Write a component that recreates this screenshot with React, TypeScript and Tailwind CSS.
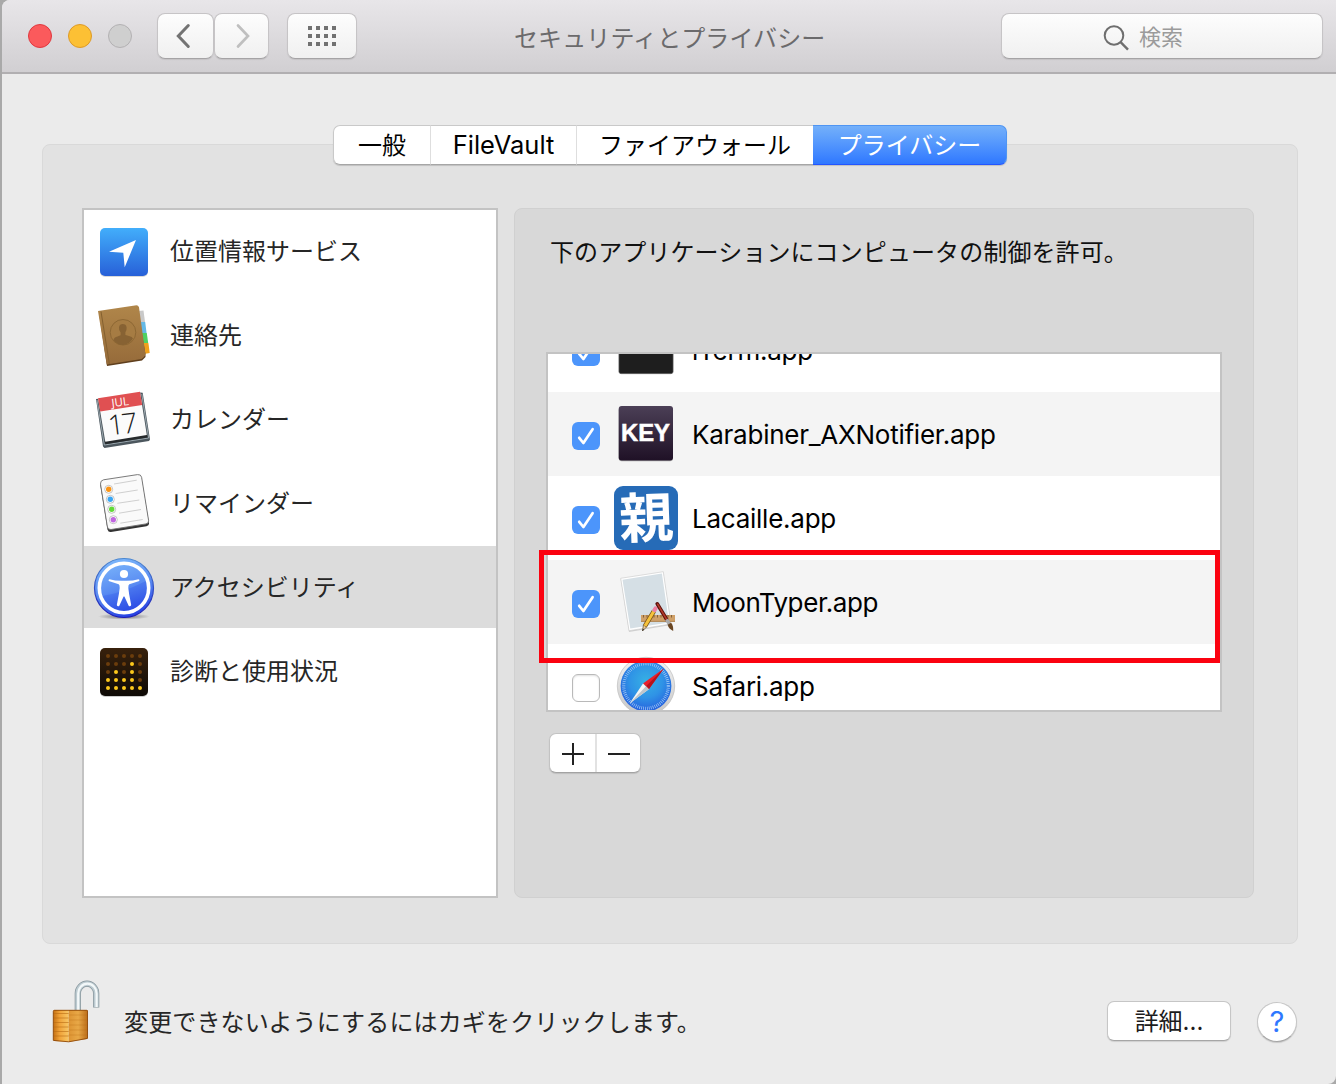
import type { ReactNode } from "react";

function Svg({ children }: { children: ReactNode }) {
  return (
    <svg width="64" height="64" viewBox="0 0 64 64" className="block shrink-0">
      {children}
    </svg>
  );
}

function LocationIcon() {
  return (
    <Svg>
      <defs>
        <linearGradient id="loc" x1="0" y1="0" x2="0" y2="1">
          <stop offset="0" stopColor="#42aefb" />
          <stop offset="1" stopColor="#2760d8" />
        </linearGradient>
      </defs>
      <rect x="8" y="9" width="48" height="48" rx="5" fill="#000" opacity="0.15" />
      <rect x="8" y="8" width="48" height="48" rx="5" fill="url(#loc)" />
      <path d="M17 31.7 44 20 32.7 47.3 31.3 32.7Z" fill="#fff" />
    </Svg>
  );
}

function ContactsIcon() {
  return (
    <Svg>
      <defs>
        <linearGradient id="book" x1="0" y1="0" x2="0" y2="1">
          <stop offset="0" stopColor="#b0864a" />
          <stop offset="1" stopColor="#966b3a" />
        </linearGradient>
      </defs>
      <path d="M46 7 51.5 6.5 53 18H47Z" fill="#c9c9c9" />
      <path d="M48 18H53.2L54.6 29H49Z" fill="#65b9e6" />
      <path d="M49 29H54.8L56.2 39H50Z" fill="#4fd163" />
      <path d="M50 39H56.4L57.7 49 52 50Z" fill="#f0a11c" />
      <path d="M7 9 15 62 50 56.5 53.5 53V50L46 8Z" fill="#5f3f1d" />
      <path d="M6 7 44.5 1.3Q46.3 1.3 47 3.2L53.4 50Q53.4 52 51.6 53.3L49.5 55 14.7 60.5Z" fill="url(#book)" />
      <path d="M9 7.5 17.4 60" stroke="#84602f" strokeWidth="1" />
      <circle cx="31" cy="28.3" r="12.8" fill="#a67c43" stroke="#8a6532" strokeWidth="0.9" />
      <path d="M21.5 36Q22 33.5 25.5 32.6L28.6 31.2V28.5Q26.6 26 27 23.3 27.6 20 30.8 20 34 20 34.6 23.3 35 26 33.4 28.3V31L37 32Q40.5 32.6 41 34.6 37 41 31 41 25 41 21.5 36Z" fill="#876233" />
    </Svg>
  );
}

function CalendarIcon() {
  return (
    <Svg>
      <path d="M4 11 9 10.5 48 4.5 50.7 4.8 58 51.5 57 53 12.5 60 11 58.5Z" fill="#4c575e" />
      <path d="M5 12 12.3 57 56.6 50 49.8 6" fill="none" stroke="#9aa7ae" strokeWidth="1" />
      <path d="M12.6 53 55 46.5 55.6 49.6 13.4 56.3Z" fill="#25292b" />
      <path d="M6 10.3 48 3.7 54.8 47 13.3 53.8Z" fill="#fbfbfb" />
      <path d="M6 10.3 48 3.7 50.2 17 8.2 23.6Z" fill="#e05052" />
      <g transform="rotate(-7 29 26)" textAnchor="middle" className="font-['Open_Sans',sans-serif]">
        <text x="29.6" y="18.2" fontSize="11.5" fill="#fff" className="font-normal">
          JUL
        </text>
        <text x="28.2" y="46" fontSize="28" fill="#1c1c1c" className="font-light tracking-[-2.5px]">
          17
        </text>
      </g>
    </Svg>
  );
}

const reminderDots = [
  { x: 16.7, y: 17.3, c: "#fb9414" },
  { x: 18.3, y: 27.3, c: "#3aa7f4" },
  { x: 19.7, y: 37.3, c: "#62da38" },
  { x: 21.3, y: 47.7, c: "#c065e0" },
];

function RemindersIcon() {
  return (
    <Svg>
      <path d="M8.3 13 15.5 57.5Q16.2 60.3 19 60L54.5 54.3Q57.3 53.6 57 51L49.5 6Z" fill="#333" />
      <path d="M11.5 7.8 45.5 2.6Q49 2.2 49.6 5.2L56.6 48.5Q57 51.3 54 51.9L19 57.5Q16 57.8 15.4 55L8.5 12Q8.2 8.6 11.5 7.8Z" fill="#fafafa" stroke="#6c6c6c" strokeWidth="0.9" />
      <path d="M22 12 44.7 8.2M23.7 21.5 45.7 18M25.3 31.3 47.3 28M27 41.2 49 37.5M28.3 51.2 50.7 47.5" stroke="#c4c4c4" strokeWidth="0.8" />
      {reminderDots.map((d) => (
        <g key={d.c}>
          <circle cx={d.x} cy={d.y} r="4" fill="#fff" stroke="#b5b5b5" strokeWidth="0.8" />
          <circle cx={d.x} cy={d.y} r="2.7" fill={d.c} />
        </g>
      ))}
    </Svg>
  );
}

function AccessibilityIcon() {
  return (
    <Svg>
      <defs>
        <linearGradient id="acc" x1="0.3" y1="0" x2="0.6" y2="1">
          <stop offset="0" stopColor="#7db8fb" />
          <stop offset="0.5" stopColor="#5a8cf2" />
          <stop offset="1" stopColor="#2540e2" />
        </linearGradient>
        <linearGradient id="accRim" x1="0" y1="0" x2="0" y2="1">
          <stop offset="0" stopColor="#4a86cf" />
          <stop offset="1" stopColor="#1a18b8" />
        </linearGradient>
        <radialGradient id="accShadow">
          <stop offset="0" stopColor="#000" stopOpacity="0.5" />
          <stop offset="1" stopColor="#000" stopOpacity="0" />
        </radialGradient>
      </defs>
      <ellipse cx="32" cy="60.5" rx="26" ry="3.2" fill="url(#accShadow)" />
      <circle cx="32" cy="32" r="29.5" fill="url(#acc)" stroke="url(#accRim)" strokeWidth="1.2" />
      <path d="M10 40Q28 38 54 25A22.6 22.6 0 0 1 54 37 22.6 22.6 0 0 1 10 40Z" fill="#1e40e8" opacity="0.2" />
      <circle cx="32" cy="32" r="24.7" fill="none" stroke="#fff" strokeWidth="3.6" />
      <circle cx="32" cy="18" r="4.1" fill="#fff" />
      <path d="M17.5 23.2Q24 25.2 32 24.8 40 25.2 46.5 23.2 47.8 23.5 47.3 25L37.3 28.3Q36.2 29 36.3 32L37.2 38.5 39.2 49Q38.6 50.8 36.8 50L32.4 40.5H31.6L27.2 50Q25.4 50.8 24.8 49L26.8 38.5 27.7 32Q27.8 29 26.7 28.3L16.7 25Q16.2 23.5 17.5 23.2Z" fill="#fff" />
    </Svg>
  );
}

const dotRows = ["00000", "00010", "01010", "11110", "11111"];

function DiagnosticsIcon() {
  return (
    <Svg>
      <defs>
        <linearGradient id="diag" x1="0" y1="0" x2="0" y2="1">
          <stop offset="0" stopColor="#38210c" />
          <stop offset="1" stopColor="#0e0a06" />
        </linearGradient>
      </defs>
      <rect x="8" y="9" width="48" height="48" rx="5" fill="#000" opacity="0.2" />
      <rect x="8" y="8" width="48" height="48" rx="5" fill="url(#diag)" />
      {dotRows.map((row, r) =>
        row.split("").map((v, c) => (
          <circle key={`${r}-${c}`} cx={16 + c * 8} cy={16 + r * 8} r="2" fill={v === "1" ? "#fcc81c" : "#6b3d0c"} />
        )),
      )}
    </Svg>
  );
}

function TerminalIcon() {
  return (
    <Svg>
      <rect x="5" y="2" width="54" height="53.6" rx="2" fill="#1e1e1e" stroke="#4a4a4a" strokeWidth="0.8" />
    </Svg>
  );
}

function KeyIcon() {
  return (
    <Svg>
      <defs>
        <linearGradient id="key" x1="0" y1="0" x2="0" y2="1">
          <stop offset="0" stopColor="#4b3f56" />
          <stop offset="1" stopColor="#1f1126" />
        </linearGradient>
      </defs>
      <rect x="4.7" y="5.2" width="54.3" height="54" rx="3" fill="#000" opacity="0.3" />
      <rect x="4.7" y="4" width="54.3" height="54.5" rx="3" fill="url(#key)" />
      <text x="31.5" y="39.4" textAnchor="middle" fontSize="23.5" textLength="49" lengthAdjust="spacingAndGlyphs" fill="#fff" stroke="#fff" strokeWidth="0.5" className="font-['Liberation_Sans',sans-serif] font-bold">
        KEY
      </text>
    </Svg>
  );
}

function LacailleIcon() {
  return (
    <Svg>
      <rect width="64" height="64" rx="9" fill="#266bb7" />
      <text x="32.3" y="51.5" textAnchor="middle" fontSize="54" fill="#fff" transform="rotate(-2 32 32)" className="font-['Noto_Sans_CJK_JP',sans-serif] font-bold">
        親
      </text>
    </Svg>
  );
}

function MoonTyperIcon() {
  return (
    <Svg>
      <path d="M6.7 9.3 49.3 2.5 57.3 55 15 62Z" fill="#000" opacity="0.15" />
      <path d="M6.7 8.3 49.3 1.7 57 54 15 60.7Z" fill="#fff" stroke="#cfcfcf" strokeWidth="0.7" />
      <path d="M8.5 9.7 47.9 3.6 55 52.4 16.3 58.6Z" fill="#d5dfe5" />
      <rect x="27" y="45" width="34" height="6.8" fill="#cfa068" />
      <path d="M27 51.4H61" stroke="#a87d4b" strokeWidth="0.8" />
      <path d="M29.5 45v2.5M33 45v2.5M36.5 45v2.5M40 45v2.5M43.5 45v2.5M47 45v2.5M50.5 45v2.5M54 45v2.5M57.5 45v2.5" stroke="#6f5030" strokeWidth="0.8" />
      <path d="M28.5 61 29.4 55 32.5 57Z" fill="#f0cf9a" stroke="#3b2a14" strokeWidth="0.6" />
      <path d="M28.5 61 28.8 58.8 30 59.6Z" fill="#222" />
      <path d="M31 56 40 41" stroke="#6e4a10" strokeWidth="4.4" />
      <path d="M31 56 40 41" stroke="#f5c23c" strokeWidth="3.2" />
      <path d="M39.7 41.5 40.6 40" stroke="#bbb" strokeWidth="4.2" />
      <path d="M40.6 40 41.5 38.5" stroke="#ef7fa2" strokeWidth="4.2" strokeLinecap="round" />
      <path d="M43.2 33.8 53 50" stroke="#5c110b" strokeWidth="3.6" strokeLinecap="round" />
      <path d="M43.6 34.2 53 50" stroke="#b53a2a" strokeWidth="1.5" strokeLinecap="round" />
      <path d="M52.6 49.4 55.3 54" stroke="#a9a9a9" strokeWidth="3.6" />
      <path d="M53.6 54.8 57 52.8Q59.6 55.5 59.2 61 54.8 59 53.6 54.8Z" fill="#6a4623" />
    </Svg>
  );
}

function SafariIcon() {
  return (
    <Svg>
      <defs>
        <radialGradient id="saf" cx="0.5" cy="0.4" r="0.65">
          <stop offset="0" stopColor="#36b0e4" />
          <stop offset="0.5" stopColor="#2f93e6" />
          <stop offset="1" stopColor="#2458dc" />
        </radialGradient>
        <linearGradient id="safRim" x1="0" y1="0" x2="0" y2="1">
          <stop offset="0" stopColor="#f4f4f4" />
          <stop offset="1" stopColor="#c6c6c6" />
        </linearGradient>
      </defs>
      <circle cx="32" cy="32" r="28.7" fill="url(#safRim)" stroke="#bdbdbd" strokeWidth="0.7" />
      <circle cx="32" cy="32" r="25.4" fill="url(#saf)" />
      <circle cx="32" cy="32" r="22.3" fill="none" stroke="#cfeaff" strokeWidth="3.2" strokeDasharray="0.7 1.246" opacity="0.75" />
      <path d="M49.8 14.6 29 29.5 34.8 35.2Z" fill="#e8202c" />
      <path d="M49.8 14.6 32 32.3 34.8 35.2Z" fill="#b5121d" />
      <path d="M15.6 49.6 29 29.5 34.8 35.2Z" fill="#f5f5f5" />
      <path d="M15.6 49.6 32 32.3 34.8 35.2Z" fill="#bfc5ca" />
    </Svg>
  );
}

function LockIcon() {
  return (
    <svg width="56" height="72" viewBox="0 0 56 72" className="block shrink-0">
      <defs>
        <linearGradient id="brassL" x1="0" y1="0" x2="1" y2="0">
          <stop offset="0" stopColor="#c46f12" />
          <stop offset="0.4" stopColor="#f0a238" />
          <stop offset="1" stopColor="#f8c765" />
        </linearGradient>
        <linearGradient id="brassR" x1="0" y1="0" x2="1" y2="0">
          <stop offset="0" stopColor="#dd9433" />
          <stop offset="0.5" stopColor="#e8a847" />
          <stop offset="1" stopColor="#bb6c17" />
        </linearGradient>
      </defs>
      <path d="M29.8 35V17.5A9.2 9.8 0 0 1 48.2 17.5V31.6" fill="none" stroke="#84939a" strokeWidth="6.2" />
      <path d="M29.8 35V17.5A9.2 9.8 0 0 1 48.2 17.5V31" fill="none" stroke="#bccad0" strokeWidth="4.8" />
      <path d="M30.2 35V17.5A9.2 9.8 0 0 1 48.6 17.5V31" fill="none" stroke="#f3f8f9" strokeWidth="2.2" />
      <path d="M5.3 35Q5.3 34 6.5 34H20.7V66L6.5 65Q5.3 64.8 5.3 63.8Z" fill="url(#brassL)" />
      <path d="M20.7 34H38.6Q39.7 34 39.7 35V61.5Q39.7 62.7 38.6 63L20.7 66Z" fill="url(#brassR)" />
      <path d="M5.5 37.5H20.7M5.5 42H20.7M5.5 46.5H20.7M5.5 51H20.7M5.5 55.5H20.7M5.5 60H20.7" stroke="#b96c14" strokeWidth="1.2" opacity="0.6" />
      <path d="M20.7 39H39.5M20.7 44H39.5M20.7 49H39.5M20.7 54H39.5M20.7 59H39.5" stroke="#b96c14" strokeWidth="0.8" opacity="0.4" />
      <path d="M5.3 64.4 20.7 65.8 39.5 62.4V35Q39.7 34.3 38.6 34.3H6.5Q5.3 34.3 5.3 35.3Z" fill="none" stroke="#8e4809" strokeWidth="0.9" />
    </svg>
  );
}

function Checkbox({ checked }: { checked: boolean }) {
  return checked ? (
    <span className="mt-1 flex size-7 shrink-0 items-center justify-center rounded-[6px] bg-[#4c95fb]">
      <svg width="28" height="28" viewBox="0 0 28 28" fill="none">
        <path d="M7.2 15.8 11.4 21 20.6 7.2" stroke="#fff" strokeWidth="2.7" strokeLinecap="round" strokeLinejoin="round" />
      </svg>
    </span>
  ) : (
    <span className="mt-1 size-7 shrink-0 rounded-[6px] border border-[#b9b9b9] bg-white shadow-[inset_0_1px_2px_rgba(0,0,0,0.12)]" />
  );
}

const services = [
  { label: "位置情報サービス", icon: <LocationIcon /> },
  { label: "連絡先", icon: <ContactsIcon /> },
  { label: "カレンダー", icon: <CalendarIcon /> },
  { label: "リマインダー", icon: <RemindersIcon /> },
  { label: "アクセシビリティ", icon: <AccessibilityIcon />, selected: true },
  { label: "診断と使用状況", icon: <DiagnosticsIcon /> },
];

const apps = [
  { name: "iTerm.app", icon: <TerminalIcon />, checked: true, spacing: "tracking-[-0.25px]" },
  { name: "Karabiner_AXNotifier.app", icon: <KeyIcon />, checked: true, spacing: "tracking-[-0.25px]" },
  { name: "Lacaille.app", icon: <LacailleIcon />, checked: true, spacing: "tracking-[-0.25px]" },
  { name: "MoonTyper.app", icon: <MoonTyperIcon />, checked: true, spacing: "tracking-[-0.4px]" },
  { name: "Safari.app", icon: <SafariIcon />, checked: false, spacing: "tracking-[-0.3px]" },
];

const toolButton =
  "flex h-[46px] items-center justify-center rounded-[8px] border border-[#c6c4c6] border-b-[#a5a3a5] bg-linear-to-b from-[#fdfdfd] to-[#f0f0f0] shadow-[0_1px_1px_rgba(0,0,0,0.08)]";

function TitleBar() {
  return (
    <header className="flex h-[74px] shrink-0 rounded-tl-[8px] border-b-2 border-[#b1afb1] bg-linear-to-b from-[#e8e6e9] to-[#d1cfd2] pt-[13px] pr-[13px] pl-[26px]">
      <div className="flex h-[46px] items-center gap-4">
        <span className="size-6 rounded-full border border-[#e0383f] bg-[#fb5a5c]" />
        <span className="size-6 rounded-full border border-[#dd9a28] bg-[#fcc034]" />
        <span className="size-6 rounded-full border border-[#b3b1b3] bg-[#cfcfcf]" />
      </div>
      <button className={`${toolButton} ml-[25px] w-[57px]`}>
        <svg width="20" height="28" viewBox="0 0 20 28" fill="none">
          <path d="M12.3 3.5 2.3 14 12.3 24.5" stroke="#737373" strokeWidth="3" strokeLinecap="round" />
        </svg>
      </button>
      <button className={`${toolButton} w-[55px]`}>
        <svg width="20" height="28" viewBox="0 0 20 28" fill="none">
          <path d="M6 3.5 16 14 6 24.5" stroke="#bfbfbf" strokeWidth="2.7" strokeLinecap="round" />
        </svg>
      </button>
      <button className={`${toolButton} ml-[18px] w-[70px]`}>
        <span className="grid grid-cols-4 gap-1">
          {Array.from({ length: 12 }, (_, i) => (
            <span key={i} className="size-1 bg-[#717171]" />
          ))}
        </span>
      </button>
      <h1 className="ml-[157px] flex h-[52px] items-center text-[24px] tracking-[0.1px] text-[#6b6a6c]">セキュリティとプライバシー</h1>
      <div className={`${toolButton} ml-auto w-[322px] pr-[39px] text-[22px] text-[#9b9b9b]`}>
        <svg width="28" height="28" viewBox="0 0 28 28" fill="none" className="mt-px mr-[9px]">
          <circle cx="12" cy="12.5" r="9.3" stroke="#6e6e6e" strokeWidth="2" />
          <path d="M18.6 19.2 26 26.6" stroke="#6e6e6e" strokeWidth="2.4" />
        </svg>
        <span className="pt-0.5">検索</span>
      </div>
    </header>
  );
}

function Tabs() {
  return (
    <nav className="z-10 ml-[291px] flex h-10 w-[674px] rounded-[7px] text-[24px] leading-none text-black shadow-[0_1px_1px_rgba(0,0,0,0.15)]">
      <div className="flex w-[97px] items-center justify-center rounded-l-[7px] border border-r-0 border-[#c9c9c9] border-b-[#a6a6a6] bg-white pt-px">一般</div>
      <div className="flex w-[146px] items-center justify-center border border-r-0 border-[#c9c9c9] border-b-[#a6a6a6] border-l-[#dedede] bg-white">
        <span className="text-[25.5px]">FileVault</span>
      </div>
      <div className="flex w-[237px] items-center justify-center border border-r-0 border-[#c9c9c9] border-b-[#a6a6a6] border-l-[#dedede] bg-white pt-px">ファイアウォール</div>
      <div className="flex w-[194px] items-center justify-center rounded-r-[7px] border border-l-0 border-[#4f95f3] border-b-[#2355ff] bg-linear-to-b from-[#74b0fa] to-[#2f77ff] pt-px text-white">
        プライバシー
      </div>
    </nav>
  );
}

function Sidebar() {
  return (
    <ul className="h-[690px] w-[416px] shrink-0 border-2 border-[#c3c3c3] bg-white text-[24px] text-[#262626]">
      {services.map((s) => (
        <li key={s.label} className="h-[84px]">
          <div className={s.selected ? "h-[82px] bg-[#dcdcdc]" : "h-[82px]"}>
            <div className="flex h-[84px] items-center gap-[14px] pl-2">
              {s.icon}
              <span className="pb-px">{s.label}</span>
            </div>
          </div>
        </li>
      ))}
    </ul>
  );
}

function AppTable() {
  return (
    <div className="relative mt-[81px] h-[360px] w-[676px]">
      <div className="flex h-full flex-col justify-start overflow-hidden border-2 border-[#c3c3c3] bg-white">
        <ul className="-mt-[46px]">
          {apps.map((a, i) => (
            <li key={a.name} className={i % 2 ? "flex h-[84px] items-center bg-[#f4f4f4] pl-6" : "flex h-[84px] items-center bg-white pl-6"}>
              <Checkbox checked={a.checked} />
              <span className="mr-[14px] ml-[14px]">{a.icon}</span>
              <span className={`pt-0.5 text-[26px] leading-none text-black ${a.spacing}`}>{a.name}</span>
            </li>
          ))}
        </ul>
      </div>
      <div className="absolute top-[198px] left-[-7px] h-[113px] w-[681px] border-5 border-[#fb0210]" />
    </div>
  );
}

function AddRemove() {
  return (
    <div className="mt-[21px] ml-[3px] flex h-10 w-[92px] rounded-[7px] border border-[#c3c3c3] border-b-[#a3a3a3] bg-white shadow-[0_1px_1px_rgba(0,0,0,0.12)]">
      <button className="flex w-[47px] items-center justify-center border-r-2 border-[#e2e2e2] pt-0.5">
        <svg width="22" height="22" viewBox="0 0 22 22">
          <path d="M0 11H22M11 0V22" stroke="#222" strokeWidth="2" />
        </svg>
      </button>
      <button className="flex flex-1 items-center justify-center pt-0.5">
        <svg width="22" height="22" viewBox="0 0 22 22">
          <path d="M0 11H22" stroke="#222" strokeWidth="2" />
        </svg>
      </button>
    </div>
  );
}

export default function App() {
  return (
    <div className="h-[1084px] w-[1336px] overflow-hidden bg-[#a9a9a9] pl-[2px] font-[Inter,'Noto_Sans_CJK_JP',sans-serif]">
      <div className="flex h-full flex-col rounded-tl-[8px] rounded-br-[8px] bg-[#ebebeb]">
        <TitleBar />
        <main className="flex flex-col px-[38px] pt-[51px] pl-10">
          <Tabs />
          <section className="-mt-[21px] flex h-[800px] w-[1256px] gap-4 rounded-[8px] border border-[#d9d9d9] bg-[#e2e2e2] pt-[63px] pl-[39px]">
            <Sidebar />
            <div className="h-[690px] w-[740px] rounded-[8px] border border-[#d0d0d0] bg-[#d8d8d8] pt-[26px] pl-[31px]">
              <p className="pl-1 text-[24px] leading-9 tracking-[0.1px] text-[#111]">下のアプリケーションにコンピュータの制御を許可。</p>
              <AppTable />
              <AddRemove />
            </div>
          </section>
        </main>
        <footer className="flex pt-8 pr-[39px] pl-[46px]">
          <LockIcon />
          <p className="ml-5 pt-[29px] text-[24px] leading-9 tracking-[0.15px] text-[#262626]">変更できないようにするにはカギをクリックします。</p>
          <button className="mt-[25px] ml-auto flex h-10 w-[124px] items-center justify-center rounded-[7px] border border-[#c6c6c6] border-b-[#a6a6a6] bg-white pt-px text-[24px] text-[#1c1c1c] shadow-[0_1px_1px_rgba(0,0,0,0.12)]">
            詳細...
          </button>
          <button className="mt-[26px] ml-[26px] flex size-10 items-center justify-center rounded-full border border-[#c6c6c6] border-b-[#a6a6a6] bg-white text-[29px] text-[#2f78ff] shadow-[0_1px_1px_rgba(0,0,0,0.15)]">
            ?
          </button>
        </footer>
      </div>
    </div>
  );
}
